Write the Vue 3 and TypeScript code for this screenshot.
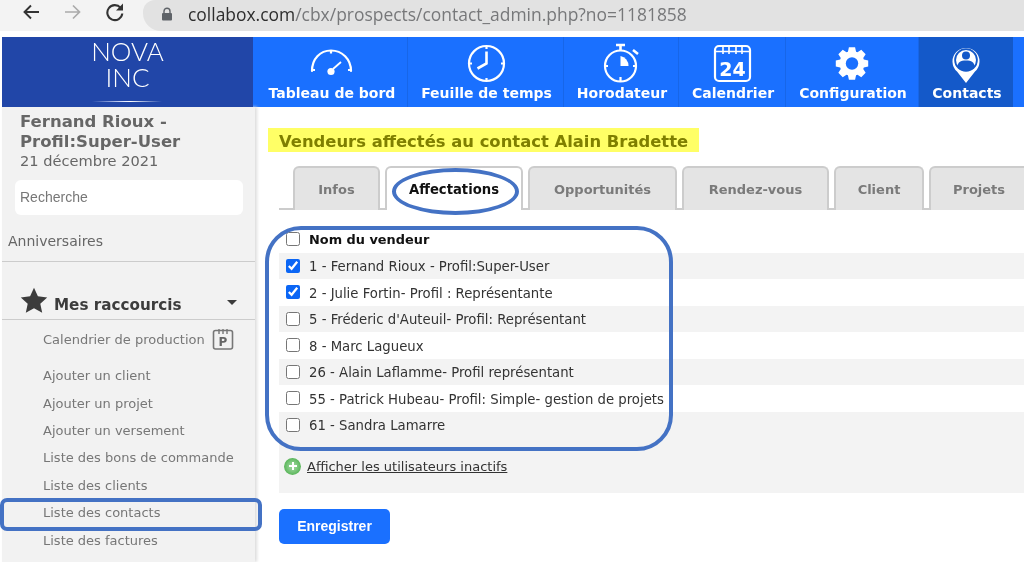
<script setup lang="ts">
const nav = [
  { label: 'Tableau de bord', w: 155, icon: 'gauge' },
  { label: 'Feuille de temps', w: 156, icon: 'clock' },
  { label: 'Horodateur', w: 115, icon: 'timer' },
  { label: 'Calendrier', w: 107, icon: 'cal' },
  { label: 'Configuration', w: 133, icon: 'gear' },
  { label: 'Contacts', w: 94, icon: 'pin', active: true },
]
const links = [
  { t: 'Ajouter un client', h: 28 },
  { t: 'Ajouter un projet', h: 27 },
  { t: 'Ajouter un versement', h: 27 },
  { t: 'Liste des bons de commande', h: 28 },
  { t: 'Liste des clients', h: 27 },
  { t: 'Liste des contacts', h: 28 },
  { t: 'Liste des factures', h: 28 },
  { t: 'Liste des notes', h: 28 },
]
const tabs = [
  { t: 'Infos', w: 87 },
  { t: 'Affectations', w: 138, active: true },
  { t: 'Opportunités', w: 149 },
  { t: 'Rendez-vous', w: 147 },
  { t: 'Client', w: 90 },
  { t: 'Projets', w: 100 },
]
const rows = [
  { t: '1 - Fernand Rioux - Profil:Super-User', c: true },
  { t: '2 - Julie Fortin- Profil : Représentante', c: true },
  { t: "5 - Fréderic d'Auteuil- Profil: Représentant", c: false },
  { t: '8 - Marc Lagueux', c: false },
  { t: '26 - Alain Laflamme- Profil représentant', c: false },
  { t: '55 - Patrick Hubeau- Profil: Simple- gestion de projets', c: false },
  { t: '61 - Sandra Lamarre', c: false },
]

function gearPath(cx: number, cy: number, ro: number, ri: number, teeth: number): string {
  const pts: string[] = []
  const step = (Math.PI * 2) / teeth
  for (let i = 0; i < teeth; i++) {
    const a = i * step - Math.PI / 2
    const spec: [number, number][] = [
      [ri, a - step * 0.42],
      [ro, a - step * 0.24],
      [ro, a + step * 0.24],
      [ri, a + step * 0.42],
    ]
    for (const [r, t] of spec) {
      pts.push(`${(cx + r * Math.cos(t)).toFixed(2)} ${(cy + r * Math.sin(t)).toFixed(2)}`)
    }
  }
  return 'M' + pts.join('L') + 'Z'
}
const gear = gearPath(23, 21.5, 16.5, 12.5, 8)
</script>

<template>
  <div class="page">
    <div class="browser">
      <svg class="bicon first" width="20" height="20" viewBox="0 0 20 20"><path d="M18 10H3.500M10 3.500 3.500 10l6.500 6.500" fill="none" stroke="#333" stroke-width="1.900"/></svg>
      <svg class="bicon" width="20" height="20" viewBox="0 0 20 20"><path d="M2 10h14.500M10 3.500l6.500 6.500-6.500 6.500" fill="none" stroke="#aaa" stroke-width="1.700"/></svg>
      <svg class="bicon" width="20" height="20" viewBox="0 0 20 20"><path d="M15.600 5.800A7.500 7.500 0 1 0 17.300 11.500" fill="none" stroke="#333" stroke-width="2.100"/><path d="M18 1.500v7h-7z" fill="#333"/></svg>
      <div class="url">
        <svg width="12" height="14" viewBox="0 0 12 14"><path d="M3 6V4.200a3 3 0 0 1 6 0V6" fill="none" stroke="#5f6368" stroke-width="1.400"/><rect x="1" y="6" width="10" height="7.500" rx="1" fill="#5f6368"/></svg>
        <span class="u1">collabox.com</span><span class="u2">/cbx/prospects/contact_admin.php?no=1181858</span>
      </div>
    </div>

    <header class="top">
      <div class="logo">
        <div class="l1">NOVA</div>
        <div class="l2">INC</div>
        <div class="swoosh"></div>
      </div>
      <nav class="nav">
        <div v-for="n in nav" :key="n.label" class="item" :class="{ on: n.active }" :style="{ width: n.w + 'px' }">
          <svg class="ico" width="46" height="42" viewBox="0 0 46 42">
            <g v-if="n.icon === 'gauge'" fill="none" stroke="#fff" stroke-width="2.200">
              <path d="M5 29C5 17 13 8.500 24 8.500S44 17 44 29" stroke-linecap="round"/>
              <path d="M5 28h3M41 28h3M24 8.500v3" />
              <path d="M26 27l8-7" stroke-width="1.800"/>
              <circle cx="24" cy="29.500" r="3.600" fill="#fff" stroke="none"/>
            </g>
            <g v-else-if="n.icon === 'clock'" fill="none" stroke="#fff" stroke-width="2.200">
              <circle cx="23.500" cy="21.500" r="17.500"/>
              <path d="M23.500 9.500v12l-9 5" stroke-width="2.600"/>
              <path d="M23.500 4v3M23.500 36v3M6 21.500h3M38 21.500h3"/>
            </g>
            <g v-else-if="n.icon === 'timer'" fill="none" stroke="#fff" stroke-width="2.200">
              <circle cx="22.500" cy="24" r="15.500"/>
              <path d="M18 3h9M22.500 3v6M35 8l5 4" stroke-width="2.600"/>
              <path d="M22.500 24V14a10 10 0 0 1 8 10z" fill="#fff" stroke="none"/>
              <path d="M22.500 35v4M7 24h3M35 24h3"/>
            </g>
            <g v-else-if="n.icon === 'cal'" fill="none" stroke="#fff" stroke-width="2.200">
              <rect x="6" y="4" width="35" height="35" rx="4"/>
              <path d="M6 9.500h35M14 5v7M20 5v7M27 5v7M33 5v7" stroke-width="1.600"/>
              <text x="23.500" y="33.500" text-anchor="middle" class="calnum" fill="#fff" stroke="none">24</text>
            </g>
            <g v-else-if="n.icon === 'gear'">
              <path fill="#fff" :d="gear"/>
              <circle cx="23" cy="21.500" r="6.200" fill="#1a70ff"/>
            </g>
            <g v-else>
              <path d="M23 41 14 29.500A13.500 13.500 0 1 1 32 29.500z" fill="#fff"/>
              <circle cx="23" cy="18" r="11.800" fill="#1459c9"/>
              <circle cx="23" cy="18" r="10" fill="#fff"/>
              <circle cx="23" cy="13.500" r="4" fill="#1459c9"/>
              <path d="M14.500 25c0-5 3-6.500 8.500-6.500s8.500 1.500 8.500 6.500a11 11 0 0 1-17 0z" fill="#1459c9"/>
            </g>
          </svg>
          <div class="lbl">{{ n.label }}</div>
        </div>
      </nav>
    </header>

    <div class="body">
      <aside class="side">
        <div class="who">
          <div class="name">Fernand Rioux -<br />Profil:Super-User</div>
          <div class="date">21 décembre 2021</div>
        </div>
        <div class="search">Recherche</div>
        <div class="anniv">Anniversaires</div>
        <div class="short">
          <svg width="28" height="26" viewBox="0 0 28 26"><path d="M14 .800l3.900 8.500 9.300 1.100-6.900 6.300 1.900 9.100L14 21.200l-8.200 4.600 1.900-9.100L.800 10.400l9.300-1.100z" fill="#3c3c3c"/></svg>
          <span>Mes raccourcis</span>
          <i class="caret"></i>
        </div>
        <div class="prod">
          <span>Calendrier de production</span>
          <svg width="22" height="22" viewBox="0 0 22 22"><rect x="1.500" y="2.500" width="19" height="18.500" rx="2" fill="none" stroke="#777" stroke-width="1.600"/><path d="M7 1v5M11 1v5M15 1v5" stroke="#777" stroke-width="1.400"/><text x="11" y="17.500" text-anchor="middle" class="pnum" fill="#666">P</text></svg>
        </div>
        <div v-for="l in links" :key="l.t" class="link" :style="{ height: l.h + 'px' }">{{ l.t }}</div>
      </aside>

      <main class="main">
        <h1 class="title">Vendeurs affectés au contact Alain Bradette</h1>
        <div class="tabs">
          <div v-for="t in tabs" :key="t.t" class="tab" :class="{ on: t.active }" :style="{ width: t.w + 'px' }">{{ t.t }}</div>
        </div>
        <div class="list">
          <label class="row head"><input type="checkbox" /><b>Nom du vendeur</b></label>
          <label v-for="r in rows" :key="r.t" class="row"><input type="checkbox" :checked="r.c" /><span>{{ r.t }}</span></label>
          <div class="more">
            <span class="plus"></span>
            <a>Afficher les utilisateurs inactifs</a>
          </div>
        </div>
        <button class="save">Enregistrer</button>
      </main>
    </div>

    <div class="hl"></div>
    <div class="mark m-list"></div>
    <div class="mark m-tab"></div>
    <div class="mark m-side"></div>
  </div>
</template>

<style>
html, body { margin: 0; overflow: hidden; background: #fff; }
</style>

<style scoped>
.page { position: relative; width: 1024px; height: 562px; overflow: hidden; background: #fff; font-family: "DejaVu Sans", Verdana, sans-serif; }
.browser { height: 31px; background: #f3f3f3; display: flex; align-items: flex-start; }
.bicon { margin: 2px 22px 0 0; flex: none; }
.bicon.first { margin-left: 21px; }
.url { flex: 1; height: 31px; margin-left: -4px; background: #e2e2e2; border-radius: 12px 0 0 18px; display: flex; align-items: center; padding: 0 0 4px 18px; box-sizing: border-box; font: 17.450px "Open Sans", "Noto Sans", sans-serif; white-space: nowrap; }
.url svg { margin-right: 15px; }
.u1 { color: #2e2e2e; }
.u2 { color: #77787a; }
.top { margin-top: 6px; height: 70px; display: flex; padding-left: 2px; background: #fff; }
.logo { width: 251px; background: #2146a8; color: #fff; text-align: center; padding-top: 1px; box-sizing: border-box; position: relative; }
.l1, .l2 { font: 300 26px/26px Lato, sans-serif; }
.swoosh { position: absolute; left: 90px; top: 64px; width: 70px; height: 1px; background: linear-gradient(90deg, transparent, #dfe6ff 45%, #fff 55%, transparent); }
.nav { flex: 1; display: flex; background: #1a70ff; }
.item { box-sizing: border-box; border-right: 1px solid #1766e8; color: #fff; text-align: center; display: flex; flex-direction: column; align-items: center; }
.item.on { background: #1459c9; border-right: 0; }
.ico { margin-top: 5px; height: 42px; }
.lbl { font-weight: 700; font-size: 14px; line-height: 16px; margin-top: 1px; padding-left: 2px; white-space: nowrap; }
.item:first-child .lbl { padding-left: 4px; }
.calnum { font: 700 19px "DejaVu Sans", sans-serif; }
.pnum { font: 700 12px "DejaVu Sans", sans-serif; }
.body { display: flex; height: 455px; padding-left: 2px; }
.side { width: 253px; flex: none; box-sizing: border-box; background: #f2f2f2; box-shadow: 2px 0 3px #ddd; color: #777; font-size: 13px; }
.who { padding: 5px 0 0 18px; color: #666; }
.name { font-weight: 700; font-size: 16.500px; line-height: 20px; color: #666; }
.date { font-size: 14.600px; line-height: 17px; }
.search { margin: 11px 12px 0 13px; height: 35px; background: #fff; border-radius: 6px; font: 14px/35px "Liberation Sans", sans-serif; color: #777; padding-left: 5px; }
.anniv { margin-top: 18px; padding: 0 0 11px 6px; height: 17px; line-height: 17px; border-bottom: 1px solid #ccc; font-size: 14px; color: #666; }
.short { height: 58px; box-sizing: border-box; border-bottom: 1px solid #ccc; display: flex; align-items: flex-end; padding: 0 0 6px 18px; color: #3c3c3c; font-weight: 700; font-size: 15.200px; position: relative; }
.short span { margin-left: 6px; line-height: 18px; transform: translateY(1px); }
.caret { position: absolute; left: 225px; top: 38px; border: 5px solid transparent; border-top: 5px solid #3c3c3c; border-bottom: 0; }
.prod { height: 42px; padding: 8px 0 0 41px; box-sizing: border-box; display: flex; gap: 7px; line-height: 24px; }
.link { padding-left: 41px; line-height: 27px; }
.main { flex: 1; min-width: 0; padding-left: 24px; color: #333; }
.title { margin: 24px 0 0; font-size: 16.400px; line-height: 22px; font-weight: 700; color: #7f7f00; position: relative; z-index: 2; white-space: nowrap; mix-blend-mode: multiply; }
.tabs { margin-top: 13px; display: flex; gap: 5px; padding-left: 14px; border-bottom: 2px solid #ccc; height: 42px; width: 760px; position: relative; }
.tab { flex: none; box-sizing: border-box; height: 44px; border: 2px solid #ccc; border-bottom: 0; border-radius: 6px 6px 0 0; background: #e4e4e4; color: #7a7a7a; font-weight: 700; font-size: 13px; line-height: 43px; text-align: center; }
.tab.on { background: #fff; color: #111; font-size: 13.200px; }
.list { margin-top: 16px; font-size: 13.250px; color: #333; }
.row { height: 26.500px; display: flex; align-items: center; padding-left: 7px; box-sizing: border-box; }
.row span { padding-top: 2px; margin-left: -1px; }
.row b { font-size: 12.900px; margin-left: -1px; }
.row input { width: 14px; height: 14px; margin: 0 10px 0 0; accent-color: #0b66f5; flex: none; }
.row:nth-child(even) { background: #f3f3f3; }
.row.head { color: #111; }
.more { height: 55px; background: #f3f3f3; display: flex; align-items: center; padding: 1px 0 0 5px; box-sizing: border-box; }
.more a { margin-left: 6px; text-decoration: underline; color: #333; font-size: 13px; }
.plus { width: 17px; height: 17px; border-radius: 50%; background: radial-gradient(circle, #8fd08f 0 3px, #5fb85f 8px, #8ccf8c 9px); flex: none; position: relative; }
.plus::before { content: ""; position: absolute; left: 4.500px; top: 7.500px; width: 8px; height: 2px; background: #fff; }
.plus::after { content: ""; position: absolute; left: 7.500px; top: 4.500px; width: 2px; height: 8px; background: #fff; }
.save { margin-top: 16px; width: 111px; height: 35px; border: 0; border-radius: 5px; background: #1a70ff; color: #fff; font: 700 14px "Liberation Sans", sans-serif; display: block; padding: 0 0 2px; }
.hl { position: absolute; left: 268px; top: 128px; width: 431px; height: 24px; background: #ffff66; }
.mark { position: absolute; border: 4px solid #4472c4; box-sizing: border-box; z-index: 3; }
.m-list { left: 265px; top: 226px; width: 408px; height: 225px; border-radius: 36px; }
.m-tab { left: 392px; top: 168px; width: 127px; height: 47px; border-radius: 50%; }
.m-side { left: 0; top: 498px; width: 262px; height: 33px; border-radius: 7px; }
</style>
